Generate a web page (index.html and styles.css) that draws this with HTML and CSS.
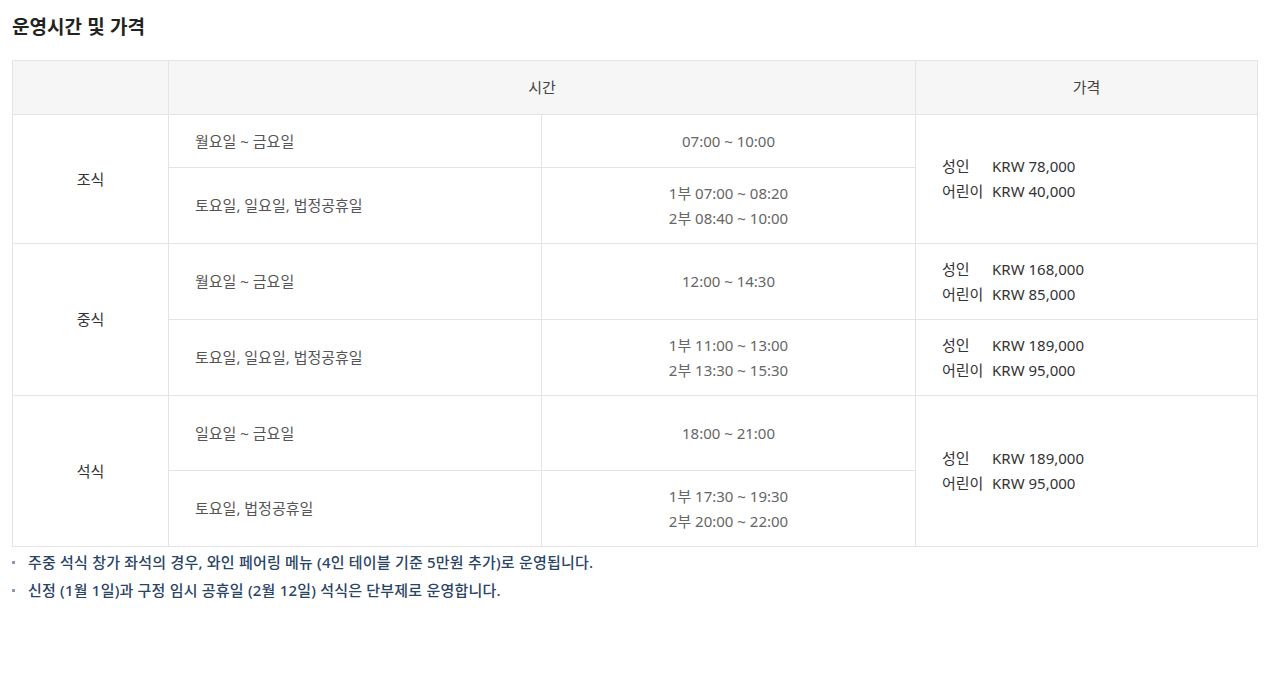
FILE: index.html
```html
<!DOCTYPE html>
<html lang="ko">
<head>
    <meta charset="utf-8">
    <title>운영시간 및 가격</title>
    <link rel="stylesheet" href="styles.css">
</head>
<body>
    <h2 class="title">운영시간 및 가격</h2>

    <table class="hours">
        <colgroup>
            <col class="col-meal">
            <col class="col-day">
            <col class="col-time">
            <col class="col-price">
        </colgroup>
        <thead>
            <tr class="row-head">
                <th></th>
                <th colspan="2">시간</th>
                <th>가격</th>
            </tr>
        </thead>
        <tbody>
            <tr class="row-a">
                <td class="meal" rowspan="2">조식</td>
                <td class="day">월요일 ~ 금요일</td>
                <td class="time">07:00 ~ 10:00</td>
                <td class="price" rowspan="2">
                    <p><span>성인</span>KRW 78,000</p>
                    <p><span>어린이</span>KRW 40,000</p>
                </td>
            </tr>
            <tr class="row-b">
                <td class="day">토요일, 일요일, 법정공휴일</td>
                <td class="time">1부 07:00 ~ 08:20<br>2부 08:40 ~ 10:00</td>
            </tr>
            <tr class="row-b">
                <td class="meal" rowspan="2">중식</td>
                <td class="day">월요일 ~ 금요일</td>
                <td class="time">12:00 ~ 14:30</td>
                <td class="price">
                    <p><span>성인</span>KRW 168,000</p>
                    <p><span>어린이</span>KRW 85,000</p>
                </td>
            </tr>
            <tr class="row-b">
                <td class="day">토요일, 일요일, 법정공휴일</td>
                <td class="time">1부 11:00 ~ 13:00<br>2부 13:30 ~ 15:30</td>
                <td class="price">
                    <p><span>성인</span>KRW 189,000</p>
                    <p><span>어린이</span>KRW 95,000</p>
                </td>
            </tr>
            <tr class="row-c">
                <td class="meal" rowspan="2">석식</td>
                <td class="day">일요일 ~ 금요일</td>
                <td class="time">18:00 ~ 21:00</td>
                <td class="price" rowspan="2">
                    <p><span>성인</span>KRW 189,000</p>
                    <p><span>어린이</span>KRW 95,000</p>
                </td>
            </tr>
            <tr class="row-b">
                <td class="day">토요일, 법정공휴일</td>
                <td class="time">1부 17:30 ~ 19:30<br>2부 20:00 ~ 22:00</td>
            </tr>
        </tbody>
    </table>

    <ul class="notes">
        <li>주중 석식 창가 좌석의 경우, 와인 페어링 메뉴 (4인 테이블 기준 5만원 추가)로 운영됩니다.</li>
        <li>신정 (1월 1일)과 구정 임시 공휴일 (2월 12일) 석식은 단부제로 운영합니다.</li>
    </ul>
</body>
</html>
```

FILE: styles.css
```css
body {
  margin: 0;
  padding: 0 12px;
  font-family: "Noto Sans", "Noto Sans CJK KR", sans-serif;
  color: #333;
  background: #fff;
}

.title {
  margin: 0;
  padding-top: 11px;
  height: 60px;
  box-sizing: border-box;
  font-family: "Noto Sans CJK KR", sans-serif;
  font-size: 19px;
  font-weight: 700;
  line-height: 30px;
  color: #222;
}

/* schedule table */
.hours {
  width: 1245px;
  border-collapse: collapse;
  table-layout: fixed;
  font-size: 15px;
  line-height: 25px;
}

.col-meal { width: 156px; }
.col-day { width: 373px; }
.col-time { width: 374px; }
.col-price { width: 342px; }

.hours th,
.hours td {
  border: 1px solid #e4e4e4;
  padding: 0;
  vertical-align: middle;
}

.hours th {
  background: #f6f6f6;
  font-weight: 400;
  color: #444;
  text-align: center;
}

.row-head { height: 54px; }
.row-a { height: 53px; }
.row-b { height: 76px; }
.row-c { height: 75px; }

.meal {
  text-align: center;
  color: #333;
}

.day {
  padding-left: 26px !important;
  color: #555;
}

.time {
  text-align: center;
  color: #666;
}

.price {
  padding-left: 26px !important;
  color: #333;
}

.price p {
  margin: 0;
}

.price span {
  display: inline-block;
  width: 50px;
}

/* notes */
.notes {
  list-style: none;
  margin: 1px 0 0;
  padding: 0;
  font-size: 15px;
  line-height: 28px;
  letter-spacing: 0.2px;
  font-weight: 500;
  color: #2a4466;
}

.notes li {
  position: relative;
  padding-left: 16px;
}

.notes li::before {
  content: "";
  position: absolute;
  left: 0;
  top: 13px;
  width: 3px;
  height: 3px;
  background: #8a9bb0;
}
```
